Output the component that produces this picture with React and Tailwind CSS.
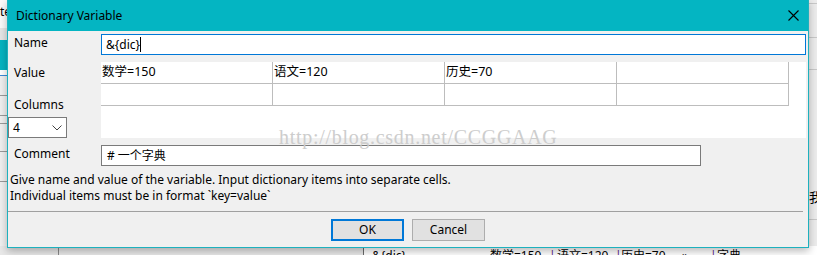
import React from "react";

const cells = [
  ["数学=150", "语文=120", "历史=70", ""],
  ["", "", "", ""],
];

const CloseIcon = () => (
  <svg width="11" height="11" viewBox="0 0 11 11">
    <path d="M0.5 0.5 L10.5 10.5 M10.5 0.5 L0.5 10.5" stroke="#000" strokeWidth="1.1" />
  </svg>
);

const Chevron = () => (
  <svg width="10" height="6" viewBox="0 0 10 6">
    <polyline points="0.5,0.5 5,5 9.5,0.5" fill="none" stroke="#444" strokeWidth="1" />
  </svg>
);

const Background = () => (
  <div className="absolute inset-0 flex flex-col">
    <div className="flex h-[246px]">
      {/* window behind, left sliver */}
      <div className="w-[7px] flex flex-col overflow-hidden">
        <div className="h-[28px] bg-[#fafafa] pt-[4px] text-[12px] leading-[16px] whitespace-nowrap">te</div>
        <div className="h-[12px] bg-[#e6e6e6]"></div>
        <div className="h-[30px] bg-[#05b4c1]"></div>
        <div className="h-[6px] bg-white border-b border-[#3c8ad8]"></div>
        <div className="h-[20px] bg-[#f0f0f0] border-b border-[#9a9a9a]"></div>
        <div className="h-[20px] bg-[#f0f0f0] border-b border-[#9a9a9a]"></div>
        <div className="h-[8px] bg-[#f0f0f0] border-b border-[#9a9a9a]"></div>
        <div className="h-[28px] bg-[#f0f0f0] border-b border-[#9a9a9a]"></div>
        <div className="h-[30px] bg-[#f0f0f0] border-b border-[#9a9a9a]"></div>
        <div className="flex-1 bg-[#f0f0f0]"></div>
      </div>
      <div className="flex-1 bg-[#f0f0f0]"></div>
      {/* right sliver */}
      <div className="w-[8px] flex flex-col overflow-hidden bg-[#ececec]">
        <div className="h-[4px] border-b border-[#c8c8c8]"></div>
        <div className="h-[34px] border-b border-[#c8c8c8]"></div>
        <div className="h-[32px] border-b border-[#c8c8c8]"></div>
        <div className="h-[118px]"></div>
        <div className="text-[13px] leading-[18px] whitespace-nowrap">我</div>
        <div className="h-[14px] border-b border-[#c8c8c8]"></div>
      </div>
    </div>
    {/* table of the window behind, bottom sliver */}
    <div className="flex flex-1 overflow-hidden text-[12px] leading-[16px]">
      <div className="w-[58px] bg-[#e8e8e8]"></div>
      <div className="w-px bg-[#8a8a8a]"></div>
      <div className="w-[304px] bg-[#e8e8e8]"></div>
      <div className="w-px bg-[#6a6a6a]"></div>
      <div className="flex-1 bg-white flex pt-[2px] whitespace-nowrap">
        <span className="ml-[8px] w-[118px]">&amp;{"{dic}"}</span>
        <span className="w-[59px]">数学=150</span>
        <span className="w-[8px] text-[#602080]">|</span>
        <span className="w-[58px]">语文=120</span>
        <span className="w-[6px] text-[#602080]">|</span>
        <span className="w-[61px]">历史=70</span>
        <span className="w-[28px]">»</span>
        <span className="w-[7px] text-[#602080]">|</span>
        <span>字典</span>
      </div>
    </div>
  </div>
);

const App = () => {
  return (
    <div className="relative w-[817px] h-[255px] overflow-hidden bg-[#f0f0f0] text-black font-['Noto_Sans','Noto_Sans_CJK_SC',sans-serif]">
      <Background />

      {/* Dialog window */}
      <div className="absolute left-[7px] top-0 w-[802px] h-[248px] flex flex-col bg-[#f0f0f0] border-x border-b border-[#1db1be] shadow-[0_3px_8px_rgba(0,0,0,0.28)]">
        {/* Title bar */}
        <div className="h-[31px] shrink-0 bg-[#04b5c2] flex items-center justify-between pl-[8px] pr-[9px]">
          <span className="text-[12px] leading-[16px]">Dictionary Variable</span>
          <CloseIcon />
        </div>

        {/* Name */}
        <div className="flex mt-[3px] h-[21px]">
          <div className="w-[93px] pl-[6px] pt-[1px] text-[12px] leading-[16px]">Name</div>
          <div className="w-[705px] border border-[#0078d7] bg-white flex items-center pl-[4px] text-[12px]">
            <span>&amp;{"{dic}"}</span>
            <span className="w-px h-[15px] bg-black"></span>
          </div>
        </div>

        {/* Value + Columns */}
        <div className="flex mt-[7px] h-[76px]">
          <div className="w-[93px] flex flex-col justify-between">
            <div className="pl-[6px] pt-[3px] text-[12px] leading-[16px]">Value</div>
            <div className="flex flex-col">
              <div className="pl-[6px] mb-[4px] text-[12px] leading-[16px]">Columns</div>
              <div className="w-[59px] h-[21px] border border-[#7a7a7a] bg-white flex items-center justify-between pl-[4px] pr-[4px] text-[12px]">
                <span>4</span>
                <Chevron />
              </div>
            </div>
          </div>
          <div className="w-[705px] bg-white">
            <div className="grid grid-cols-4 w-[688px]">
              {cells.flat().map((c, i) => (
                <div
                  key={i}
                  className="h-[22px] border-r border-b border-[#bdbdbd] flex items-center pl-px text-[12.5px] whitespace-nowrap"
                >
                  {c}
                </div>
              ))}
            </div>
          </div>
        </div>

        {/* Comment */}
        <div className="flex mt-[7px] h-[21px]">
          <div className="w-[93px] pl-[6px] pt-[1px] text-[12px] leading-[16px]">Comment</div>
          <div className="w-[600px] border border-[#7a7a7a] bg-white flex items-center pl-[5px] text-[12px]">
            # 一个字典
          </div>
        </div>

        {/* Help text */}
        <div className="mt-[6px] pl-[2px] text-[12px] leading-[16px]">
          <p>Give name and value of the variable. Input dictionary items into separate cells.</p>
          <p>Individual items must be in format `key=value`</p>
        </div>

        <div className="mt-[7px] mr-[5px] h-px bg-[#a0a0a0]"></div>

        {/* Buttons */}
        <div className="mt-[7px] flex justify-center gap-[8px]">
          <button className="w-[73px] h-[22px] border-2 border-[#0078d7] bg-[#e1e1e1] text-[12px] leading-[16px]">
            OK
          </button>
          <button className="w-[73px] h-[22px] border border-[#adadad] bg-[#e1e1e1] text-[12px] leading-[16px]">
            Cancel
          </button>
        </div>
      </div>

      {/* csdn watermark over the shot */}
      <div className="absolute left-[279px] top-[127px] text-[20px] leading-[20px] tracking-[0.7px] text-[#cdcdcd] whitespace-nowrap font-['Liberation_Serif',serif] pointer-events-none">
        http://blog.csdn.net/CCGGAAG
      </div>
    </div>
  );
};

export default App;
